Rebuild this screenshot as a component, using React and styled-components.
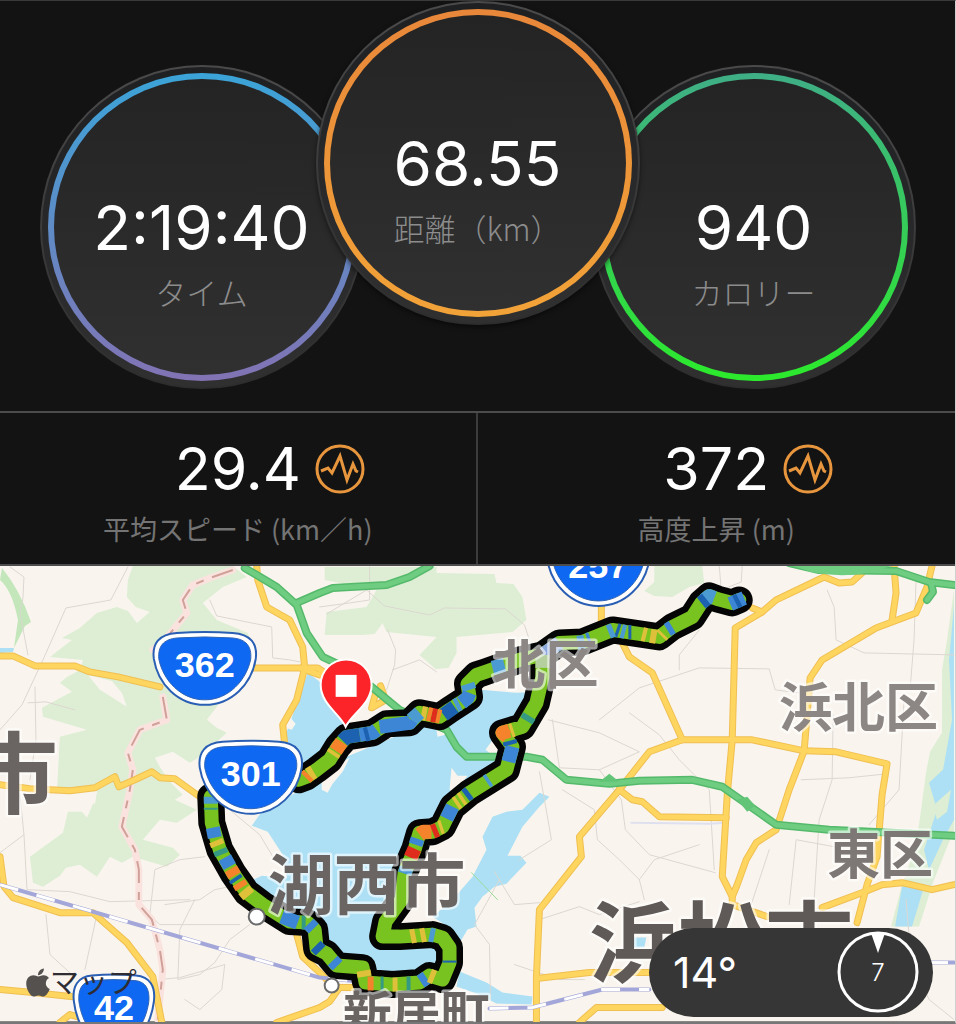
import styled, { createGlobalStyle } from "styled-components"
import { FaApple } from "react-icons/fa"

const rings = [
    { label: "タイム", value: "2:19:40", from: "#3ba4d8", to: "#8273b4" },
    { label: "距離（km）", value: "68.55", from: "#e8873a", to: "#f2a338", front: true },
    { label: "カロリー", value: "940", from: "#3fae86", to: "#2cea2c" },
]

const stats = [
    { label: "平均スピード (km／h)", value: "29.4" },
    { label: "高度上昇 (m)", value: "372" },
]

const forests = [
    "133,566 128,580 127,597 136,607 150,612 137,623 128,611 117,607 97,613 80,628 62,638 72,640 50,657 83,660 80,670 67,677 60,683 72,692 42,708 43,717 87,730 60,737 57,790 97,792 95,800 87,818 82,812 68,812 63,833 30,857 33,883 43,887 60,876 66,868 80,865 97,877 110,857 122,863 133,857 167,867 180,855 173,848 143,840 160,820 177,823 197,810 175,800 183,795 168,780 160,767 155,758 173,752 190,763 200,757 227,733 217,728 207,720 217,707 253,647 248,633 217,620 203,603 223,587 247,577 233,566",
    "325,567 437,567 437,573 495,574 497,583 514,584 523,597 527,620 513,632 457,637 457,653 449,668 436,669 420,655 437,637 387,632 383,623 375,634 363,635 325,635 327,612 367,607 377,590 325,580",
    "655,566 703,566 705,583 690,587 673,597 655,596 645,591 655,582",
    "955,590 948,640 943,670 943,733 931,752 927,773 920,825 912,860 903,885 892,927 920,927 935,880 955,830",
]

const clearings = [
    "88,675 100,690 127,707 122,693 112,681",
    "88,793 95,805 97,792 92,785",
]

const waters = [
    "308,673 318,680 330,692 350,722 345,745 325,770 300,785 290,760 286,735 297,704 302,690",
    "300,790 325,775 347,757 400,735 450,712 482,690 517,693 540,692 530,718 502,728 486,750 505,765 480,785 456,800 430,825 412,850 402,890 385,925 395,935 433,935 447,950 440,980 420,982 372,972 352,958 325,950 310,915 290,912 270,895 250,882 262,876 287,878 283,855 268,832 252,826 262,812 285,800",
    "550,797 540,793 523,810 507,812 493,817 483,837 487,850 473,877 453,900 433,917 453,930 458,947 468,930 477,927 475,908 483,897 495,887 507,884 527,863 521,856 508,856 523,827 540,807",
    "460,972 487,983 503,993 533,997 532,1005 497,1004 477,994 457,987",
    "903,887 925,887 913,927 896,927",
    "955,605 950,660 953,720 944,770 930,783 938,810 925,850 930,870 944,840 955,820",
    "0,648 14,648 13,652 0,653",
    "632,938 647,938 645,948 632,948",
]

const shores = [
    "350,758 343,772 333,784 328,793 322,790 322,783 330,770",
    "437,730 444,728 450,734 438,737",
    "452,768 458,776 468,776 455,793 450,790",
    "413,860 420,890 404,925 396,922 402,890",
    "288,715 296,724 292,730 286,728",
]

const minorRoads = [
    "10,567 24,577 23,598 20,613 28,655",
    "128,567 111,600 66,608 43,660 22,705 0,730",
    "28,703 46,702 75,710",
    "35,687 36,740 30,780",
    "210,600 217,616 272,627 273,658 290,660 300,662",
    "370,567 370,600 350,603 320,607",
    "388,630 396,650 395,665 387,690",
    "327,614 367,590 385,606 430,615 445,608 506,609 525,625 530,640",
    "393,670 420,660 437,672",
    "720,566 722,590 742,582 743,566",
    "700,630 680,655 680,670",
    "600,720 640,688 700,668 770,669 776,690 800,693",
    "828,590 835,607 837,640 865,653 955,655",
    "917,580 915,640 911,690",
    "834,715 833,780 820,820 815,900",
    "905,700 900,790 870,825",
    "802,780 850,778 888,774",
    "630,713 660,735 680,760 710,790 715,870",
    "549,720 600,733 640,752 600,770 560,768 553,720",
    "540,772 545,800 552,840 520,860",
    "563,790 595,810 598,840 620,860 640,880 645,900",
    "600,770 622,800 626,830 650,855 716,873",
    "495,872 515,905 540,903",
    "500,880 475,925 490,945 491,1000",
    "540,920 580,907 600,915 640,902",
    "515,965 560,980 585,980",
    "640,880 655,860 700,845",
    "752,905 770,850",
    "790,905 797,840 835,847",
    "907,900 912,960 930,1000 955,1020",
    "20,795 24,835 0,853",
    "24,835 27,890 70,892 110,902 190,900",
    "205,857 180,860 155,870 150,915 160,925 185,925 240,925",
    "165,905 200,900 215,890 240,885",
    "195,900 180,930 178,980 200,975 215,963 230,940 250,925",
    "46,915 50,955 72,975",
    "97,915 85,970",
    "160,980 180,978 225,965 222,990 200,1010 185,1000",
    "230,810 260,835 275,860",
]

const yellowRoads = [
    "0,656 13,656 35,666 75,666 90,672 118,677 160,687",
    "250,668 300,668 320,675",
    "0,785 30,789 70,791 95,788 115,777 119,787 135,780 152,772 160,778 175,779 200,797",
    "257,566 258,580 267,607 290,620 303,647 305,668 297,700 283,725 285,745",
    "302,668 318,668 330,676",
    "0,857 4,887 13,898 60,913 93,913 127,943 140,960 153,977 162,1023",
    "0,990 33,993 80,998",
    "60,1023 70,1015 80,1018",
    "277,1023 320,1008 330,1002 340,988 366,988",
    "297,935 303,957 320,973 333,986",
    "602,607 602,625 623,643 630,657 653,673 683,740",
    "863,573 853,582 840,583 825,577 777,600 763,612 736,628 733,740 728,795 723,877 733,897",
    "620,790 650,752 683,740 753,740 805,751 837,752 888,764 883,795 878,857 868,885 858,923",
    "933,566 928,587 917,613 877,628 823,660 811,678 807,727 805,751 790,790 777,830 757,843 747,860 738,885 733,897 733,905 768,917",
    "895,566 897,593 893,620",
    "753,608 763,612",
    "620,790 580,837 582,857 540,910 537,977 537,1023",
    "620,790 633,800 643,802 660,817 727,818",
    "537,979 590,973 650,973",
    "580,1023 597,1008 663,1008",
    "823,908 863,893 883,885 903,883 933,890 955,885",
    "377,690 372,708 386,700 381,686",
]

const greenRoads = [
    "245,568 262,578 277,587 297,605 307,633 323,657 340,665 372,687 400,710 447,730 457,747 467,757 527,757 543,760 567,780 610,784 640,781 693,780 723,787 777,825 830,830 955,836",
    "297,603 320,593 333,588 387,585 410,577 430,566",
    "790,563 820,570 897,571 930,582 955,585",
    "932,583 934,592 928,600",
]

const borderLine = ["233,570 210,578 193,585 183,600 187,613 165,640 153,650", "163,697 167,720 140,730 128,753 133,770 130,790 122,827 135,850 139,870 139,905 152,920 160,950 163,970 158,1020"]

const railways = ["0,885 320,978 370,983", "490,1009 533,1008 603,990 650,990", "930,963 955,963"]

const route = [
    "740,600 733,603 718,599 710,596 702,603 693,617 673,627 660,637 640,634 613,630 583,642 560,643 543,655 520,660 500,667 486,672 477,675 468,684 470,697 450,710 440,717 420,713 410,723 387,724 373,733 347,737 338,747 330,760 317,770 307,777 299,780",
    "211,797 212,823 220,850 233,873 247,893 263,905 290,922 308,923 315,930 317,949 327,954 337,966 363,968 366,983 393,985 420,983 430,976 443,980 450,963 450,948 443,938 433,935 400,937 383,937 386,922 402,900 405,873 415,850 420,833 433,832 443,827 453,807 470,793 507,770 513,747 503,733 523,727 537,703 543,677 543,655",
]

const blue = "#3d86d6"
const navy = "#1c62b0"
const sky = "#4b9bd2"
const teal = "#349a84"
const yellow = "#dfc03a"
const orange = "#f4832c"
const red = "#e02c1c"

// pace changes painted over the green base line
const paces = [
    ["745,598 731,604", blue], ["740,600 736,602", navy], ["715,598 710,596 705,600", sky], ["707,599 702,603", navy],
    ["673,627 668,630", blue], ["664,634 662,636", yellow], ["657,637 651,636", yellow], ["647,635 643,634", yellow],
    ["632,632 629,632", navy], ["626,632 622,631", sky], ["620,631 617,630", navy], ["614,630 609,632", sky], ["591,639 588,640", blue],
    ["585,642 578,643", sky], ["560,643 543,655", "#8ea9dd"], ["505,665 493,668", sky],
    ["468,684 470,690", sky], ["470,693 468,698 462,703", blue], ["460,704 456,706", sky], ["455,707 444,715", navy],
    ["441,717 437,716", orange], ["437,716 432,715", red], ["432,715 428,714", orange], ["427,714 422,713", yellow],
    ["420,713 412,720", sky], ["412,720 410,723 380,727", blue], ["377,730 373,733 360,735", blue], ["369,734 365,735", navy],
    ["360,735 347,737 343,741", navy], ["342,742 336,751", orange], ["335,752 333,755", yellow], ["314,772 309,775", yellow],
    ["309,775 306,778", orange], ["211,797 211,804", sky], ["211,808 211,810", teal], ["213,828 215,838", blue],
    ["216,841 218,846", yellow], ["220,850 222,855", teal], ["225,858 230,867", blue], ["231,869 235,876", orange],
    ["235,878 237,881", navy], ["239,883 242,888", orange], ["244,890 249,896", yellow], ["282,917 298,923", blue],
    ["302,923 306,923", teal], ["309,924 314,929", blue], ["316,946 321,951", navy], ["333,961 338,966", blue],
    ["364,971 365,977", yellow], ["368,984 374,984", orange], ["381,984 384,984", teal], ["393,985 398,985", yellow],
    ["407,984 411,984", teal], ["421,982 427,978", blue], ["430,976 435,978", yellow], ["450,963 450,961", navy],
    ["435,936 430,935", sky], ["426,935 421,936", yellow], ["416,936 411,937", yellow], ["405,874 407,868", sky],
    ["411,858 415,849", red], ["416,845 418,839", blue], ["420,835 424,832 432,832", orange], ["433,832 438,830", red],
    ["440,828 443,827", yellow], ["447,819 453,807", blue], ["456,804 459,802", yellow], ["461,800 464,798", yellow], ["466,796 470,793", navy],
    ["487,782 490,780", sky], ["509,762 513,747", blue], ["511,745 510,741", navy], ["508,737 503,733 510,731", orange],
    ["511,731 514,730", yellow], ["527,721 530,716", teal], ["543,668 543,655", "#b5cf9e"],
]

const roundShield = "M-28 1Q0 -1 28 1C46 2 53 12 51 27C47 52 27 73 0 73C-27 73 -47 52 -51 27C-53 12 -46 2 -28 1Z"
const roundShieldInner = "M-27 6Q0 4 27 6C42 7 47 15 46 27C42 48 24 68 0 68C-24 68 -42 48 -46 27C-47 15 -42 7 -27 6Z"
const smallShield = "M-22 1Q0 -1 22 1C36 2 42 12 40 27C37 52 22 73 0 73C-22 73 -37 52 -40 27C-42 12 -36 2 -22 1Z"
const smallShieldInner = "M-21 6Q0 4 21 6C32 7 36 15 35 27C32 48 20 68 0 68C-20 68 -32 48 -35 27C-36 15 -32 7 -21 6Z"

const shields = [
    { number: "362", x: 205, y: 632 },
    { number: "301", x: 251, y: 741 },
    { number: "257", x: 599, y: 533 },
    { number: "42", x: 114, y: 975, small: true },
]

const places = [
    { name: "北区", x: 493, y: 684, size: 53, fill: "#8c8684" },
    { name: "浜北区", x: 780, y: 727, size: 53, fill: "#8c8684" },
    { name: "東区", x: 828, y: 874, size: 53, fill: "#7d7775" },
    { name: "湖西市", x: 268, y: 909, size: 66, fill: "#6a6462" },
    { name: "市", x: -30, y: 806, size: 88, fill: "#6a6462" },
    { name: "浜松市", x: 590, y: 975, size: 88, fill: "#5f5957" },
    { name: "新居町", x: 343, y: 1033, size: 49, fill: "#6a6462" },
]

function ActivityIcon() {
    return (
        <TrendIcon viewBox="0 0 50 50" aria-hidden="true">
            <circle cx="25" cy="25" r="23" />
            <path d="M6 27L13 24L17 29L25 12L32 36L38 20L41 27L43 28" />
        </TrendIcon>
    )
}

function Shield({ number, x, y, small }) {
    return (
        <g transform={`translate(${x} ${y})`}>
            <path d={small ? smallShield : roundShield} fill="#fff" stroke="#2a5fb4" strokeWidth="2" />
            <path d={small ? smallShieldInner : roundShieldInner} fill="#0f68f2" stroke="#2d62b5" strokeWidth="1" />
            <ShieldNumber y="45">{number}</ShieldNumber>
        </g>
    )
}

function RideMap() {
    return (
        <MapDrawing viewBox="0 566 956 456" preserveAspectRatio="xMidYMid slice">
            <rect x="0" y="566" width="956" height="456" fill="#f9f5ee" />
            {forests.map((p) => <polygon key={p} points={p} fill="#ddeed4" />)}
            {clearings.map((p) => <polygon key={p} points={p} fill="#f9f5ee" />)}
            <path d="M2 568Q20 590 31 622L25 626L14 648L18 620Q12 590 0 580" fill="#c3e6bb" />
            {waters.map((p) => <polygon key={p} points={p} fill="#ade0f4" />)}
            {shores.map((p) => <polygon key={p} points={p} fill="#f9f5ee" />)}
            <path d="M944 797L952 790L948 812L938 820L934 806Z" fill="#ddeed4" />

            {minorRoads.map((p) => <Line key={p} points={p} $color="#dcd7d1" $width={1} />)}
            <Line points="632,823 710,824 727,823" $color="#dfe0ef" $width={2} />
            {borderLine.map((p) => <Line key={p} points={p} $color="#fae3de" $width={7} />)}
            {borderLine.map((p) => <Line key={p + "d"} points={p} $color="#d0a198" $width={2} $dash="22 9 8 9" />)}
            {yellowRoads.map((p) => <Line key={p} points={p} $color="#f0bf52" $width={7} />)}
            {yellowRoads.map((p) => <Line key={p + "f"} points={p} $color="#fdd55f" $width={5} />)}
            {greenRoads.map((p) => <Line key={p} points={p} $color="#55b96b" $width={8} />)}
            {greenRoads.map((p) => <Line key={p + "f"} points={p} $color="#6fcd82" $width={5} />)}
            <path d="M795 566H893L868 573Q840 578 812 572Z" fill="#6fcd82" />
            <path d="M738 800l10 -3l8 9l-8 6zM600 782l10 -8l10 8z" fill="#62c477" />
            <Line points="472,873 498,900" $color="#9bdc9b" $width={1} />
            {railways.map((p) => <Line key={p} points={p} $color="#a3a6d8" $width={4} />)}
            {railways.map((p) => <Line key={p + "f"} points={p} $color="#fff" $width={3} $dash="19 19" />)}

            {route.map((p) => <Line key={p} points={p} $color="#050505" $width={27} />)}
            {route.map((p) => <Line key={p + "f"} points={p} $color="#78c31f" $width={14} />)}
            {paces.map(([p, color]) => <Line key={p} points={p} $color={color} $width={14} $flat />)}
            <circle cx="257" cy="917" r="8" fill="#fff" stroke="#6b6b6b" strokeWidth="2" />
            <circle cx="332" cy="986" r="7" fill="#fff" stroke="#6b6b6b" strokeWidth="2" />

            {shields.map((s) => <Shield key={s.number} {...s} />)}
            {places.map((p) => (
                <Place key={p.name} x={p.x} y={p.y} fill={p.fill} fontSize={p.size}>{p.name}</Place>
            ))}

            <path d="M346 727C340 714 321 704 321 685A25 25 0 0 1 372 685C372 704 352 714 346 727Z" fill="#fc2429" stroke="#fff" strokeWidth="2" />
            <rect x="336" y="675" width="21" height="22" fill="#fff" />

            <FaApple x="22" y="967" size={32} color="#55514e" />
            <Credit x="50" y="993">マップ</Credit>
        </MapDrawing>
    )
}

export default function App() {
    return (
        <Page>
            <GlobalStyle />
            <RingRow>
                {rings.map((ring) => (
                    <Ring key={ring.label} $front={ring.front}>
                        <Dial $from={ring.from} $to={ring.to}>
                            <RingValue>{ring.value}</RingValue>
                            <RingLabel>{ring.label}</RingLabel>
                        </Dial>
                    </Ring>
                ))}
            </RingRow>
            <StatRow>
                {stats.map((stat) => (
                    <Stat key={stat.label}>
                        <StatTop>
                            <StatValue>{stat.value}</StatValue>
                            <ActivityIcon />
                        </StatTop>
                        <StatLabel>{stat.label}</StatLabel>
                    </Stat>
                ))}
            </StatRow>
            <MapBox>
                <RideMap />
                <Weather>
                    <Temperature>14°</Temperature>
                    <Compass>
                        <svg viewBox="0 0 82 82" aria-hidden="true">
                            <circle cx="41" cy="41" r="39" fill="none" stroke="#fff" strokeWidth="3" />
                            <path d="M34 2H48L41 22Z" fill="#fff" />
                        </svg>
                        <WindSpeed>7</WindSpeed>
                    </Compass>
                </Weather>
            </MapBox>
        </Page>
    )
}

const GlobalStyle = createGlobalStyle`
    * {
        box-sizing: border-box;
    }
    body {
        margin: 0;
        background: #131313;
        font-family: Inter, 'Noto Sans CJK JP', sans-serif;
    }
`
const Page = styled.main`
    border-top: 1px solid #3a3a3a;
    border-right: 1px solid #d0d0d0;
    border-bottom: 2px solid #777;
    background: #131313;
    color: #fff;
`
const RingRow = styled.section`
    display: flex;
    justify-content: center;
    align-items: flex-end;
    padding-bottom: 22px;
`
const Ring = styled.div`
    flex: none;
    width: 324px;
    height: 324px;
    padding: 6px;
    border: 2px solid transparent;
    border-radius: 50%;
    background:
        linear-gradient(#1f2022, #303031) padding-box,
        linear-gradient(#4b4a4b, #2d2d2d) border-box;
    margin: ${(props) => (props.$front ? "0 -48px 64px" : "0")};
    position: relative;
    z-index: ${(props) => (props.$front ? 1 : 0)};
    box-shadow: ${(props) => (props.$front ? "0 2px 5px rgba(0, 0, 0, 0.5)" : "none")};
`
const Dial = styled.div`
    height: 100%;
    display: flex;
    flex-direction: column;
    align-items: center;
    padding-top: 113px;
    border: 6px solid transparent;
    border-radius: 50%;
    background:
        linear-gradient(#242425, #303031) padding-box,
        linear-gradient(${(props) => props.$from}, ${(props) => props.$to}) border-box;
`
const RingValue = styled.div`
    font-size: 62px;
    line-height: 72px;
`
const RingLabel = styled.div`
    margin-top: 8px;
    font-family: 'Noto Sans CJK JP', sans-serif;
    font-size: 31px;
    font-weight: 300;
    line-height: 40px;
    color: #8c8c8c;
`
const StatRow = styled.section`
    display: grid;
    grid-template-columns: 1fr 1fr;
    border-top: 2px solid #4c4c4c;
    border-bottom: 2px solid #4c4c4c;
`
const Stat = styled.div`
    display: flex;
    flex-direction: column;
    align-items: center;
    padding: 20px 0 15px;
    &:first-child {
        border-right: 2px solid #3c3c3c;
    }
`
const StatTop = styled.div`
    display: flex;
    align-items: center;
    gap: 14px;
    padding-left: 64px;
`
const StatValue = styled.div`
    font-size: 59px;
    line-height: 72px;
`
const TrendIcon = styled.svg`
    width: 50px;
    height: 50px;
    fill: none;
    stroke: #e8963e;
    stroke-width: 3;
    stroke-linejoin: miter;
`
const StatLabel = styled.div`
    margin-top: 4px;
    font-family: 'Noto Sans CJK JP', sans-serif;
    font-size: 27px;
    line-height: 40px;
    color: #747474;
`
const MapBox = styled.section`
    position: relative;
`
const MapDrawing = styled.svg`
    display: block;
    width: 100%;
    height: auto;
`
const Line = styled.polyline`
    fill: none;
    stroke: ${(props) => props.$color};
    stroke-width: ${(props) => props.$width};
    stroke-linejoin: round;
    stroke-linecap: ${(props) => (props.$flat || props.$dash ? "butt" : "round")};
    stroke-dasharray: ${(props) => props.$dash || "none"};
`
const ShieldNumber = styled.text`
    fill: #fff;
    font-family: 'Liberation Sans', sans-serif;
    font-size: 36px;
    font-weight: 700;
    text-anchor: middle;
`
const Place = styled.text`
    font-family: 'Noto Sans CJK JP', sans-serif;
    font-weight: 700;
    stroke: rgba(255, 255, 255, 0.6);
    stroke-width: 5px;
    stroke-linejoin: round;
    paint-order: stroke;
`
const Credit = styled.text`
    font-family: 'Noto Sans CJK JP', sans-serif;
    font-size: 29px;
    fill: #2d2d33;
`
const Weather = styled.aside`
    position: absolute;
    right: 22px;
    bottom: 5px;
    display: flex;
    justify-content: space-between;
    align-items: center;
    width: 284px;
    height: 89px;
    padding: 0 14px 0 24px;
    border-radius: 45px;
    background: #363636;
`
const Temperature = styled.div`
    font-size: 43px;
`
const Compass = styled.div`
    position: relative;
    width: 82px;
    height: 82px;
`
const WindSpeed = styled.div`
    position: absolute;
    inset: 0;
    display: flex;
    justify-content: center;
    align-items: center;
    font-size: 24px;
    font-weight: 300;
`
